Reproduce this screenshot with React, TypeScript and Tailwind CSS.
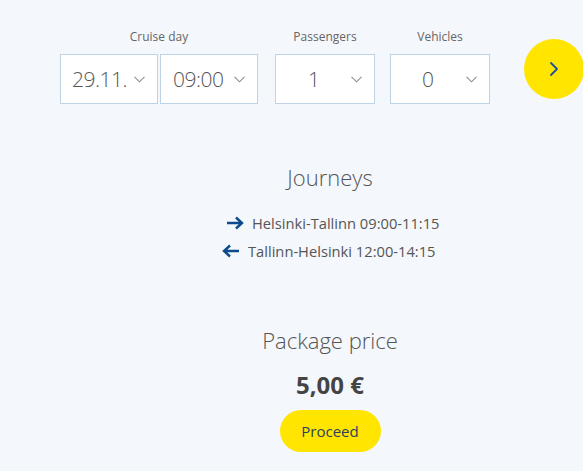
import { ChevronRight } from "lucide-react";

function Chevron() {
  return (
    <svg width="11" height="7" viewBox="0 0 11 7" fill="none" className="shrink-0">
      <path d="M0.5 0.8L5.5 5.8L10.5 0.8" stroke="#8a8f96" strokeWidth="1.1" />
    </svg>
  );
}

function Select({ value, className }: { value: string; className: string }) {
  return (
    <div
      className={`${className} h-[50px] bg-white border border-[#bfd3e6] flex items-center pr-[12px]`}
    >
      <span className="flex-1 text-[21px] font-light text-[#555] leading-none tracking-[-0.5px]">
        {value}
      </span>
      <Chevron />
    </div>
  );
}

function ArrowRight() {
  return (
    <svg width="18" height="14" viewBox="0 0 18 14" fill="none">
      <path d="M1 7h15M10 1.5L16 7l-6 5.5" stroke="#0b4a8b" strokeWidth="2.4" />
    </svg>
  );
}

function ArrowLeft() {
  return (
    <svg width="18" height="14" viewBox="0 0 18 14" fill="none">
      <path d="M17 7H2M8 1.5L2 7l6 5.5" stroke="#0b4a8b" strokeWidth="2.4" />
    </svg>
  );
}

export default function App() {
  return (
    <div
      className="w-[583px] h-[471px] bg-[#f4f7fb] overflow-hidden text-[#555]"
      style={{ fontFamily: '"Open Sans", sans-serif' }}
    >
      {/* Valinnat */}
      <div className="flex items-start pl-[60px] pt-[28px]">
        <div className="flex flex-col items-center">
          <div className="text-[12px] h-[18px] leading-[18px] mb-[8px] text-[#666]">Cruise day</div>
          <div className="flex gap-[2px]">
            <Select value="29.11." className="w-[98px] pl-[11px]" />
            <Select value="09:00" className="w-[98px] pl-[12px]" />
          </div>
        </div>
        <div className="flex flex-col items-center ml-[17px]">
          <div className="text-[12px] h-[18px] leading-[18px] mb-[8px] text-[#666]">Passengers</div>
          <Select value="1" className="w-[100px] pl-[32px]" />
        </div>
        <div className="flex flex-col items-center ml-[15px]">
          <div className="text-[12px] h-[18px] leading-[18px] mb-[8px] text-[#666]">Vehicles</div>
          <Select value="0" className="w-[100px] pl-[31px]" />
        </div>
        <button className="ml-[34px] mt-[11px] w-[60px] h-[60px] rounded-full bg-[#ffe500] flex items-center justify-center shrink-0">
          <ChevronRight className="w-6 h-6 text-[#1f4f99]" strokeWidth={1.8} />
        </button>
      </div>

      {/* Matkat */}
      <div className="flex flex-col items-center pl-[77px] mt-[57px]">
        <h2 className="text-[22px] font-light leading-[32px] text-[#555]">Journeys</h2>
      </div>
      <div className="mt-[19px] pl-[222px] flex flex-col items-start gap-[6px] text-[14.7px] leading-[22px] text-[#555]">
        <div className="flex items-center gap-2 pl-[4px]">
          <ArrowRight />
          <span>Helsinki-Tallinn 09:00-11:15</span>
        </div>
        <div className="flex items-center gap-2">
          <ArrowLeft />
          <span>Tallinn-Helsinki 12:00-14:15</span>
        </div>
      </div>

      {/* Hinta */}
      <div className="flex flex-col items-center pl-[77px]">
        <h2 className="mt-[62px] text-[22px] font-light leading-[32px] text-[#555]">Package price</h2>
        <div className="mt-[14px] text-[24px] font-bold leading-[30px] text-[#444]">5,00 €</div>
        <button className="mt-[10px] w-[101px] h-[42px] rounded-full bg-[#ffe500] text-[15px] text-[#2b3f66]">
          Proceed
        </button>
      </div>
    </div>
  );
}
